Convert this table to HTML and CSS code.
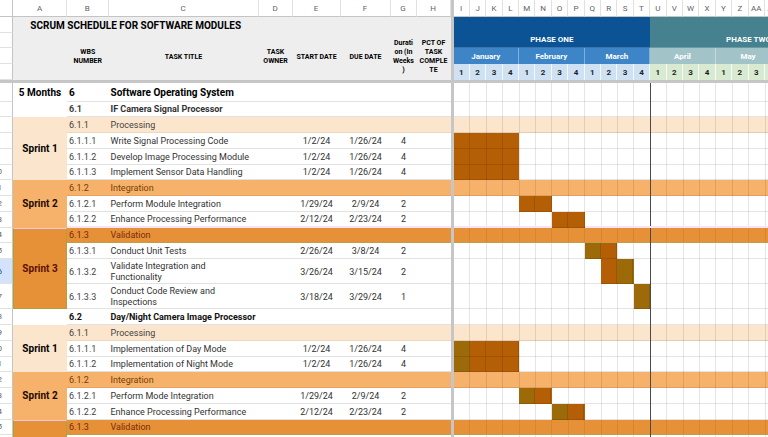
FILE: index.html
```html
<!DOCTYPE html>
<html lang="en">
<head>
<meta charset="utf-8">
<title>Scrum Schedule for Software Modules</title>
<link rel="stylesheet" href="styles.css">
</head>
<body>
<div class="sheet">
  <div class="fz-v"></div>
  <div class="fz-h"></div>

  <!-- column letters -->
  <div class="corner"></div>
  <div class="lt">A</div><div class="lt">B</div><div class="lt">C</div><div class="lt">D</div>
  <div class="lt">E</div><div class="lt">F</div><div class="lt">G</div><div class="lt">H</div>
  <div class="lt">I</div><div class="lt">J</div><div class="lt">K</div><div class="lt">L</div>
  <div class="lt">M</div><div class="lt">N</div><div class="lt">O</div><div class="lt">P</div>
  <div class="lt">Q</div><div class="lt">R</div><div class="lt">S</div><div class="lt">T</div>
  <div class="lt">U</div><div class="lt">V</div><div class="lt">W</div><div class="lt">X</div>
  <div class="lt">Y</div><div class="lt">Z</div><div class="lt">AA</div><div class="lt">AB</div>

  <!-- sheet row 1 -->
  <div class="rn"><span>1</span></div>
  <div class="hd title">SCRUM SCHEDULE FOR SOFTWARE MODULES</div>
  <div class="hd s5"></div>
  <div class="ph ph1">PHASE ONE</div>
  <div class="ph ph2"><span>PHASE TWO</span></div>

  <!-- sheet row 2 -->
  <div class="rn"><span>2</span></div>
  <div class="hd r3"></div>
  <div class="hd r3">WBS NUMBER</div>
  <div class="hd r3">TASK TITLE</div>
  <div class="hd r3">TASK OWNER</div>
  <div class="hd r3">START DATE</div>
  <div class="hd r3">DUE DATE</div>
  <div class="hd r3 brk">Durati<wbr>on (In Weeks<wbr>)</div>
  <div class="hd r3 brk">PCT OF TASK COMPLE<wbr>TE</div>

  <!-- sheet row 3 -->
  <div class="rn"><span>3</span></div>
  <div class="mo m1">January</div>
  <div class="mo m1">February</div>
  <div class="mo m1">March</div>
  <div class="mo m2">April</div>
  <div class="mo m2">May</div>

  <!-- sheet row 4 -->
  <div class="rn"><span>4</span></div>
  <div class="wk w1">1</div><div class="wk w1">2</div><div class="wk w1">3</div><div class="wk w1">4</div>
  <div class="wk w1">1</div><div class="wk w1">2</div><div class="wk w1">3</div><div class="wk w1">4</div>
  <div class="wk w1">1</div><div class="wk w1">2</div><div class="wk w1">3</div><div class="wk w1">4</div>
  <div class="wk w2">1</div><div class="wk w2">2</div><div class="wk w2">3</div><div class="wk w2">4</div>
  <div class="wk w2">1</div><div class="wk w2">2</div><div class="wk w2">3</div><div class="wk w2">4</div>

  <!-- row 5 -->
  <div class="rn"><span>5</span></div>
  <div class="a big">5 Months</div>
  <div class="c b big">6</div>
  <div class="c t big">Software Operating System</div>
  <div class="c s5"></div>
  <div class="g"></div>

  <!-- row 6 -->
  <div class="rn"><span>6</span></div>
  <div class="a"></div>
  <div class="c b bold">6.1</div>
  <div class="c t bold">IF Camera Signal Processor</div>
  <div class="c s5"></div>
  <div class="g"></div>

  <!-- row 7 -->
  <div class="rn"><span>7</span></div>
  <div class="a sp s1 span4">Sprint 1</div>
  <div class="c b proc">6.1.1</div>
  <div class="c t proc">Processing</div>
  <div class="c s5 proc"></div>
  <div class="g proc"></div>

  <!-- row 8 -->
  <div class="rn"><span>8</span></div>
  <div class="c b">6.1.1.1</div>
  <div class="c t">Write Signal Processing Code</div>
  <div class="c"></div>
  <div class="c n">1/2/24</div>
  <div class="c n">1/26/24</div>
  <div class="c n">4</div>
  <div class="c"></div>
  <div class="g"><i class="bar" style="grid-column:1 / span 4"></i></div>

  <!-- row 9 -->
  <div class="rn"><span>9</span></div>
  <div class="c b">6.1.1.2</div>
  <div class="c t">Develop Image Processing Module</div>
  <div class="c"></div>
  <div class="c n">1/2/24</div>
  <div class="c n">1/26/24</div>
  <div class="c n">4</div>
  <div class="c"></div>
  <div class="g"><i class="bar" style="grid-column:1 / span 4"></i></div>

  <!-- row 10 -->
  <div class="rn"><span>10</span></div>
  <div class="c b">6.1.1.3</div>
  <div class="c t">Implement Sensor Data Handling</div>
  <div class="c"></div>
  <div class="c n">1/2/24</div>
  <div class="c n">1/26/24</div>
  <div class="c n">4</div>
  <div class="c"></div>
  <div class="g"><i class="bar" style="grid-column:1 / span 4"></i></div>

  <!-- row 11 -->
  <div class="rn"><span>11</span></div>
  <div class="a sp s2 span3">Sprint 2</div>
  <div class="c b int">6.1.2</div>
  <div class="c t int">Integration</div>
  <div class="c s5 int"></div>
  <div class="g int"></div>

  <!-- row 12 -->
  <div class="rn"><span>12</span></div>
  <div class="c b">6.1.2.1</div>
  <div class="c t">Perform Module Integration</div>
  <div class="c"></div>
  <div class="c n">1/29/24</div>
  <div class="c n">2/9/24</div>
  <div class="c n">2</div>
  <div class="c"></div>
  <div class="g"><i class="bar" style="grid-column:5 / span 2"></i></div>

  <!-- row 13 -->
  <div class="rn"><span>13</span></div>
  <div class="c b pk">6.1.2.2</div>
  <div class="c t pk">Enhance Processing Performance</div>
  <div class="c pk"></div>
  <div class="c n pk">2/12/24</div>
  <div class="c n pk">2/23/24</div>
  <div class="c n pk">2</div>
  <div class="c pk"></div>
  <div class="g gpk"><i class="bar" style="grid-column:7 / span 2"></i></div>

  <!-- row 14 -->
  <div class="rn"><span>14</span></div>
  <div class="a sp s3 span4">Sprint 3</div>
  <div class="c b val">6.1.3</div>
  <div class="c t val">Validation</div>
  <div class="c s5 val"></div>
  <div class="g val"></div>

  <!-- row 15 -->
  <div class="rn"><span>15</span></div>
  <div class="c b">6.1.3.1</div>
  <div class="c t">Conduct Unit Tests</div>
  <div class="c"></div>
  <div class="c n">2/26/24</div>
  <div class="c n">3/8/24</div>
  <div class="c n">2</div>
  <div class="c"></div>
  <div class="g"><i class="bar ol" style="grid-column:9"></i><i class="bar" style="grid-column:10"></i></div>

  <!-- row 16 -->
  <div class="rn sel"><span>16</span></div>
  <div class="c b">6.1.3.2</div>
  <div class="c t wrap">Validate Integration and Functionality</div>
  <div class="c"></div>
  <div class="c n">3/26/24</div>
  <div class="c n">3/15/24</div>
  <div class="c n">2</div>
  <div class="c"></div>
  <div class="g"><i class="bar" style="grid-column:10"></i><i class="bar ol" style="grid-column:11"></i></div>

  <!-- row 17 -->
  <div class="rn"><span>17</span></div>
  <div class="c b">6.1.3.3</div>
  <div class="c t wrap">Conduct Code Review and Inspections</div>
  <div class="c"></div>
  <div class="c n">3/18/24</div>
  <div class="c n">3/29/24</div>
  <div class="c n">1</div>
  <div class="c"></div>
  <div class="g"><i class="bar ol" style="grid-column:12"></i></div>

  <!-- row 18 -->
  <div class="rn"><span>18</span></div>
  <div class="a"></div>
  <div class="c b bold dk">6.2</div>
  <div class="c t bold dk">Day/Night Camera Image Processor</div>
  <div class="c s5"></div>
  <div class="g"></div>

  <!-- row 19 -->
  <div class="rn"><span>19</span></div>
  <div class="a sp s1 span3">Sprint 1</div>
  <div class="c b proc">6.1.1</div>
  <div class="c t proc">Processing</div>
  <div class="c s5 proc"></div>
  <div class="g proc"></div>

  <!-- row 20 -->
  <div class="rn"><span>20</span></div>
  <div class="c b">6.1.1.1</div>
  <div class="c t">Implementation of Day Mode</div>
  <div class="c"></div>
  <div class="c n">1/2/24</div>
  <div class="c n">1/26/24</div>
  <div class="c n">4</div>
  <div class="c"></div>
  <div class="g"><i class="bar ol" style="grid-column:1"></i><i class="bar" style="grid-column:2 / span 3"></i></div>

  <!-- row 21 -->
  <div class="rn"><span>21</span></div>
  <div class="c b">6.1.1.2</div>
  <div class="c t">Implementation of Night Mode</div>
  <div class="c"></div>
  <div class="c n">1/2/24</div>
  <div class="c n">1/26/24</div>
  <div class="c n">4</div>
  <div class="c"></div>
  <div class="g"><i class="bar ol" style="grid-column:1"></i><i class="bar" style="grid-column:2 / span 3"></i></div>

  <!-- row 22 -->
  <div class="rn"><span>22</span></div>
  <div class="a sp s2 span3">Sprint 2</div>
  <div class="c b int">6.1.2</div>
  <div class="c t int">Integration</div>
  <div class="c s5 int"></div>
  <div class="g int"></div>

  <!-- row 23 -->
  <div class="rn"><span>23</span></div>
  <div class="c b">6.1.2.1</div>
  <div class="c t">Perform Mode Integration</div>
  <div class="c"></div>
  <div class="c n">1/29/24</div>
  <div class="c n">2/9/24</div>
  <div class="c n">2</div>
  <div class="c"></div>
  <div class="g"><i class="bar ol" style="grid-column:5"></i><i class="bar" style="grid-column:6"></i></div>

  <!-- row 24 -->
  <div class="rn"><span>24</span></div>
  <div class="c b">6.1.2.2</div>
  <div class="c t">Enhance Processing Performance</div>
  <div class="c"></div>
  <div class="c n">2/12/24</div>
  <div class="c n">2/23/24</div>
  <div class="c n">2</div>
  <div class="c"></div>
  <div class="g"><i class="bar ol" style="grid-column:7"></i><i class="bar" style="grid-column:8"></i></div>

  <!-- row 25 -->
  <div class="rn"><span>25</span></div>
  <div class="a sp s3 span4">Sprint 3</div>
  <div class="c b val">6.1.3</div>
  <div class="c t val">Validation</div>
  <div class="c s5 val"></div>
  <div class="g val"></div>

  <!-- row 26 -->
  <div class="rn"><span>26</span></div>
  <div class="c b">6.1.3.1</div>
  <div class="c t">Conduct Unit Tests</div>
  <div class="c"></div>
  <div class="c n">2/26/24</div>
  <div class="c n">3/8/24</div>
  <div class="c n">2</div>
  <div class="c"></div>
  <div class="g"></div>
</div>
</body>
</html>
```

FILE: styles.css
```css
* { box-sizing: border-box; margin: 0; padding: 0; }
html, body { margin: 0; background: #fff; overflow: hidden; }
body {
  width: 768px;
  height: 437px;
  font-family: Roboto, "Liberation Sans", Arial, sans-serif;
  color: #333;
}

.sheet {
  display: grid;
  width: max-content;
  grid-template-columns: 13px 54px 41.5px 150px 34px 48px 50px 26px 34px 3px repeat(20, 16.4px);
  grid-template-rows: 17px 16px 15px 16px 16px 3px 18.6px 15.7px repeat(9, 15.75px) 25.25px 25px repeat(9, 15.75px);
  grid-auto-rows: 15.75px;
}

/* frozen pane separators */
.fz-v { grid-column: 10; grid-row: 1 / -1; background: #c6c6c6; }
.fz-h { grid-column: 1 / -1; grid-row: 6; background: #c6c6c6; }

/* column letters */
.corner { border-right: 1px solid #c4c4c4; border-bottom: 1px solid #c4c4c4; }
.lt {
  display: flex; align-items: center; justify-content: center;
  font-size: 8px; color: #5f6368;
  border-right: 1px solid #e1e1e1; border-bottom: 1px solid #c4c4c4;
}

/* row numbers */
.rn {
  display: flex; align-items: center; justify-content: flex-end;
  padding-right: 4.5px; overflow: hidden;
  font-size: 8px; color: #5f6368;
  border-right: 1px solid #c4c4c4; border-bottom: 1px solid #e1e1e1;
}
.rn span { flex: none; width: 20px; text-align: center; }
.rn.sel { background: #d3e3fd; color: #0b3a8c; }

/* grey header block */
.hd {
  background: #eeeeee;
  display: flex; align-items: center; justify-content: center;
  text-align: center;
  font-size: 7px; font-weight: 700; line-height: 9px; color: #000;
  padding: 0 2px;
}
.hd.title { grid-column: span 3; font-size: 10px; line-height: 12px; padding-top: 1px; }
.hd.r3 { grid-row: span 3; padding-top: 1px; }
.s5 { grid-column: span 5; }

/* phases */
.ph {
  display: flex; align-items: flex-end; justify-content: center;
  padding-bottom: 2px;
  color: #fff; font-size: 8px; font-weight: 700; line-height: 10px;
  grid-row: span 2;
  border-bottom: 1px solid rgba(255, 255, 255, 0.2);
}
.ph1 { grid-column: span 12; background: #0b5394; }
.ph2 { grid-column: span 8; background: #45818e; justify-content: flex-start; overflow: hidden; }
.ph2 span { flex: none; width: 196.8px; text-align: center; }

.mo {
  grid-column: span 4;
  display: flex; align-items: center; justify-content: center;
  color: #fff; font-size: 8px; font-weight: 700;
  border-right: 1px solid rgba(255, 255, 255, 0.35);
}
.m1 { background: #3d85c6; }
.m2 { background: #a2c4c9; }

.wk {
  display: flex; align-items: center; justify-content: center;
  font-size: 8px; font-weight: 700; color: #1f1f1f;
  border-right: 1px solid rgba(255, 255, 255, 0.75);
}
.w1 { background: #cfe2f3; }
.w2 { background: #d9ead3; }

/* body cells */
.c {
  display: flex; align-items: center;
  padding-top: 2px;
  font-size: 9px; line-height: 11px; color: #333;
  white-space: nowrap; overflow: hidden;
  border-bottom: 1px solid #e2e2e2;
}
.b { padding-left: 2px; color: #444; }
.t { padding-left: 2px; }
.t.wrap { white-space: normal; }
.n { justify-content: center; }
.bold { font-weight: 700; }
.dk { color: #111; }
.big { font-size: 10px; font-weight: 700; color: #000; }

.a {
  display: flex; align-items: center; justify-content: center;
  font-size: 10px; font-weight: 700; color: #000;
}
.a.big { padding-top: 1px; }
.span3 { grid-row: span 3; }
.span4 { grid-row: span 4; }
.s1 { background: #fce5cd; color: #000; }
.s2 { background: #f6b26b; color: #1e0a00; }
.s3 {
  background: #e69138; color: #5b0f00;
  border: 1px solid #a9a340; border-top-color: #f2c8e4;
}

/* bands */
.proc { background-color: #fce5cd; border-bottom-color: rgba(0, 0, 0, 0.06); }
.int { background-color: #f6b26b; border-bottom-color: rgba(0, 0, 0, 0.07); }
.val { background-color: #e69138; border-bottom-color: #bfa04a; }
.c.proc { color: #434343; }
.c.int { color: #783f04; }
.c.val { color: #7a2a08; }
.c.pk { border-bottom: 2px solid #fbe2f5; }

/* gantt strip */
.g {
  grid-column: span 20;
  display: grid;
  grid-template-columns: repeat(20, 16.4px);
  background-image:
    linear-gradient(to right, transparent 196px, #4a4a4a 196px, #4a4a4a 197px, transparent 197px),
    linear-gradient(to top, rgba(0, 0, 0, 0.1) 1px, transparent 1px),
    repeating-linear-gradient(to right, transparent 0, transparent 15.4px, rgba(0, 0, 0, 0.1) 15.4px, rgba(0, 0, 0, 0.1) 16.4px);
}
.g.val {
  background-image:
    linear-gradient(to right, transparent 196px, #4a4a4a 196px, #4a4a4a 197px, transparent 197px),
    linear-gradient(to top, #bfa04a 1px, transparent 1px),
    repeating-linear-gradient(to right, transparent 0, transparent 15.4px, rgba(0, 0, 0, 0.08) 15.4px, rgba(0, 0, 0, 0.08) 16.4px);
}
.g.gpk { box-shadow: inset 0 -2px #fbe2f5; }

.bar {
  display: block;
  background-color: #b45f06;
  background-image:
    linear-gradient(to top, rgba(0, 0, 0, 0.12) 1px, transparent 1px),
    repeating-linear-gradient(to right, transparent 0, transparent 15.4px, rgba(0, 0, 0, 0.12) 15.4px, rgba(0, 0, 0, 0.12) 16.4px);
}
.bar.ol { background-color: #9c6a08; }
```
